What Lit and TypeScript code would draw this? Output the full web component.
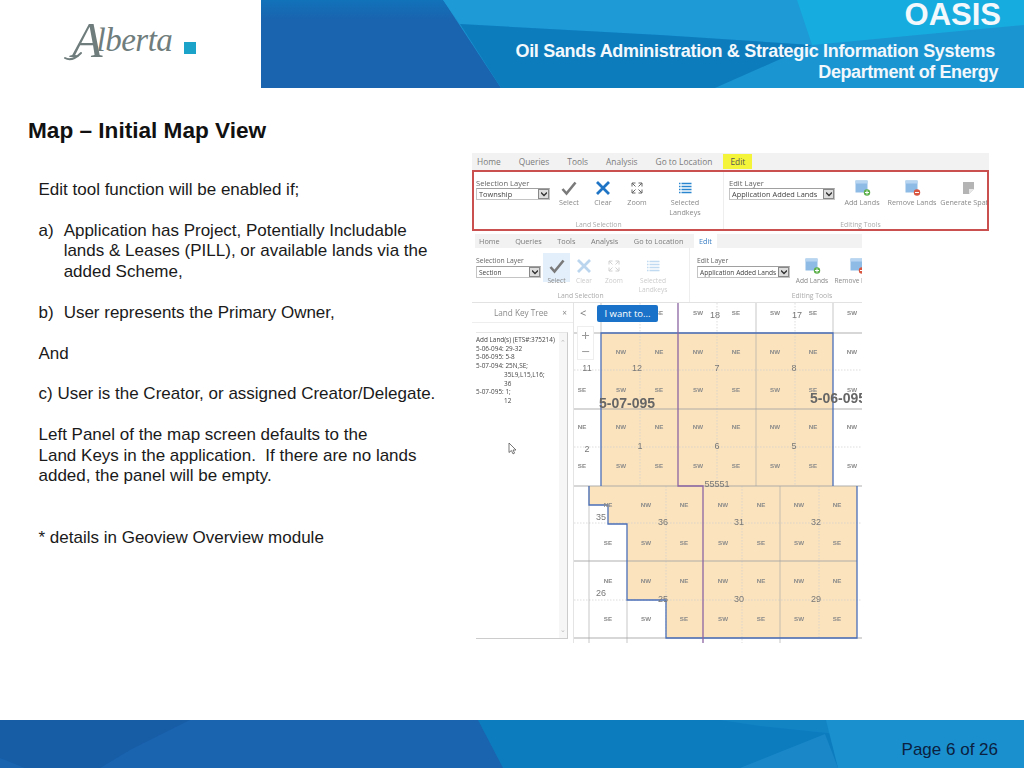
import { LitElement, css, html, svg } from "lit";
import { customElement } from "lit/decorators.js";

type Tool = { icon: string; label: string; w: number; dim?: boolean; on?: boolean };

const check = svg`<path d="M2.5 10l4 4.5L15.5 3.5" fill="none" stroke="#7a7a7a" stroke-width="2.6"/>`;
const cross = svg`<path d="M3 3l12 12M15 3L3 15" fill="none" stroke="#1f74c6" stroke-width="2.8"/>`;
const arrows = svg`<g fill="none" stroke="#666" stroke-width="1"><path d="M4 7.5V4h3.5M4 4l3.5 3.5M14 7.5V4h-3.5M14 4l-3.5 3.5M4 10.5V14h3.5M4 14l3.5-3.5M14 10.5V14h-3.5M14 14l-3.5-3.5"/></g>`;
const list = svg`<g stroke="#2b86d0" stroke-width="1.3"><path d="M5.5 4.5h10M5.5 7.5h10M5.5 10.5h10M5.5 13.5h10"/><path d="M3 4.5h1.5M3 7.5h1.5M3 10.5h1.5M3 13.5h1.5"/></g>`;
const sheet = (dot: string, sign: string) => svg`
  <rect x="2.5" y="1.5" width="12" height="12" fill="#8ebbe6"/>
  <rect x="2.5" y="1.5" width="12" height="3" fill="#b7d5f0"/>
  <circle cx="14" cy="13.5" r="3.2" fill="${dot}"/>
  <path d="${sign}" stroke="#fff" stroke-width="1"/>`;
const paper = svg`<path d="M4 3h11v7l-5 5H4z" fill="#b4b4b4"/><path d="M10 15v-5h5z" fill="#e8e8e8"/>`;

const ICONS: Record<string, unknown> = {
  check,
  cross,
  arrows,
  list,
  add: sheet("#5cb04a", "M12 13.5h4M14 11.5v4"),
  remove: sheet("#d8553f", "M12 13.5h4"),
  paper,
};

const TABS = ["Home", "Queries", "Tools", "Analysis", "Go to Location"];

const TOOLS_A: Tool[] = [
  { icon: "check", label: "Select", w: 34 },
  { icon: "cross", label: "Clear", w: 34 },
  { icon: "arrows", label: "Zoom", w: 34 },
  { icon: "list", label: "Selected Landkeys", w: 62 },
];
const EDIT_A: Tool[] = [
  { icon: "add", label: "Add Lands", w: 50 },
  { icon: "remove", label: "Remove Lands", w: 50 },
  { icon: "paper", label: "Generate Spatial", w: 62 },
];
const TOOLS_B: Tool[] = [
  { icon: "check", label: "Select", w: 27, on: true },
  { icon: "cross", label: "Clear", w: 28, dim: true },
  { icon: "arrows", label: "Zoom", w: 32, dim: true },
  { icon: "list", label: "Selected Landkeys", w: 46, dim: true },
];
const EDIT_B: Tool[] = [
  { icon: "add", label: "Add Lands", w: 40 },
  { icon: "remove", label: "Remove Lands", w: 50 },
];

// section label columns on the map, in page pixels
const TOP_X = [621, 659, 698, 736, 775, 813, 852];
const LOW_X = [608, 646, 684, 723, 761, 799, 837];

const cells = (xs: number[], y: number, names: string[]) =>
  xs.map((x, i) => svg`<text class="q" x=${x} y=${y}>${names[i % names.length]}</text>`);

const nums: [string, number, number][] = [
  ["18", 715, 318], ["17", 797, 318], ["11", 587, 371], ["12", 637, 371], ["7", 717, 371], ["8", 794, 371],
  ["2", 587, 452], ["1", 640, 449], ["6", 717, 449], ["5", 794, 449], ["55551", 717, 487],
  ["35", 601, 520], ["36", 663, 525], ["31", 739, 525], ["32", 816, 525],
  ["26", 601, 596], ["25", 663, 602], ["30", 739, 602], ["29", 816, 602],
];

@customElement("app-root")
export class AppRoot extends LitElement {
  static styles = css`
    :host {
      display: flex;
      flex-direction: column;
      width: 1024px;
      height: 768px;
      background: #fff;
      font-family: "Liberation Sans", Arial, sans-serif;
      overflow: hidden;
    }
    .header {
      display: flex;
      height: 88px;
      flex: none;
    }
    .logo {
      position: relative;
      width: 261px;
      display: flex;
      align-items: flex-start;
      padding: 16px 0 0 72px;
      box-sizing: border-box;
      color: #6f7d7c;
      font-family: "Liberation Serif", serif;
      font-style: italic;
      font-size: 33px;
      line-height: 48px;
      letter-spacing: -0.5px;
    }
    .logo b {
      font-weight: 400;
      font-size: 50px;
      letter-spacing: -6px;
    }
    .logo i {
      width: 12px;
      height: 12px;
      background: #1ba3c9;
      margin: 26px 0 0 12px;
    }
    .logo svg {
      position: absolute;
      left: 60px;
      top: 40px;
      width: 40px;
      height: 24px;
    }
    .banner {
      position: relative;
      flex: 1;
      color: #f2f8fc;
      font-weight: 700;
      text-align: right;
    }
    .bg {
      position: absolute;
      inset: 0;
      width: 100%;
      height: 100%;
    }
    .banner div {
      position: relative;
    }
    .oasis {
      font-size: 31px;
      line-height: 30px;
      padding-right: 23px;
    }
    .l1 {
      font-size: 18px;
      line-height: 20px;
      margin-top: 11px;
      padding-right: 29px;
      letter-spacing: -0.32px;
    }
    .l2 {
      font-size: 18px;
      line-height: 20px;
      margin-top: 1px;
      padding-right: 26px;
      letter-spacing: -0.42px;
    }
    .main {
      flex: 1;
      display: flex;
      min-height: 0;
    }
    .left {
      width: 472px;
      flex: none;
      padding: 31px 0 0 28px;
      box-sizing: border-box;
    }
    h1 {
      margin: 0 0 37px;
      font-size: 22.6px;
      line-height: 24px;
      color: #111;
    }
    .copy {
      padding-left: 10.5px;
      font-size: 17px;
      line-height: 20.45px;
      color: #1a1a1a;
      white-space: nowrap;
    }
    .copy p {
      margin: 0 0 20.45px;
    }
    .copy .item {
      display: flex;
      gap: 10px;
    }
    .copy .extra {
      margin-bottom: 40.9px;
    }
    .shot {
      width: 517px;
      padding-top: 65px;
      filter: blur(0.35px);
    }
    .tabs {
      display: flex;
      align-items: center;
      color: #7b7b7b;
    }
    .ribbon-a .tabs {
      height: 17px;
      gap: 18px;
      padding-left: 5px;
      background: #f2f2f2;
      font: 8.4px "Open Sans", sans-serif;
    }
    .ribbon-a .active {
      background: #f4f43a;
      color: #555;
      padding: 0 7px;
      margin-left: -7px;
      line-height: 15px;
    }
    .ribbon-a .body {
      display: flex;
      height: 61px;
      box-sizing: border-box;
      border: 2px solid #c9504e;
      overflow: hidden;
      --pad: 7px;
      --fs: 7.2px;
      --cap: 9px;
    }
    .ribbon-b {
      width: 390px;
      margin-top: 3px;
    }
    .ribbon-b .tabs {
      height: 14px;
      margin-left: 3px;
      gap: 15.5px;
      padding-left: 4px;
      background: #f2f2f2;
      font: 7.3px "Open Sans", sans-serif;
    }
    .ribbon-b .active {
      background: #fff;
      color: #3d80c4;
      padding: 0 5px;
      margin-left: -5px;
      line-height: 14px;
    }
    .ribbon-b .body {
      display: flex;
      height: 55px;
      box-sizing: border-box;
      border-bottom: 1px solid #e2e2e2;
      overflow: hidden;
      --pad: 9px;
      --fs: 6.6px;
      --cap: 11px;
    }
    .group {
      flex: none;
      display: flex;
      flex-direction: column;
      box-sizing: border-box;
      border-right: 1px solid #eee;
    }
    .group-a1 { width: 250px; }
    .group-a2 { width: 274px; }
    .group-b1 { width: 218px; }
    .group-b2 { width: 245px; }
    .row {
      flex: 1;
      display: flex;
      padding-top: var(--pad);
      min-height: 0;
    }
    .caption {
      height: var(--cap);
      font: 6.8px/9px "Open Sans", sans-serif;
      color: #ababab;
      text-align: center;
    }
    .field {
      flex: none;
      padding-left: 2px;
      font: 7.6px/8px "Open Sans", sans-serif;
      color: #666;
    }
    .group-a1 .field { width: 78px; box-sizing: border-box; padding-right: 2px; }
    .group-a2 .field { width: 113px; box-sizing: border-box; padding: 0 2px 0 5px; }
    .group-b1 .field { width: 71px; box-sizing: border-box; padding: 0 2px 0 4px; font-size: 6.8px; }
    .group-b2 .field { width: 102px; box-sizing: border-box; padding: 0 2px 0 7px; font-size: 6.8px; }
    .select {
      display: flex;
      align-items: center;
      justify-content: space-between;
      height: 12px;
      margin-top: 1px;
      border: 1px solid #c4c4c4;
      border-top-color: #a0a0a0;
      box-sizing: border-box;
      padding-left: 2px;
      color: #444;
      font: 7.4px "Open Sans", sans-serif;
      white-space: nowrap;
    }
    .ribbon-b .select {
      font-size: 6.6px;
    }
    .select u {
      flex: none;
      width: 11px;
      height: 10px;
      background: #ddd;
      border: 1px solid #888;
      box-sizing: border-box;
      display: flex;
      align-items: center;
      justify-content: center;
    }
    .select svg {
      width: 6px;
      height: 6px;
    }
    .tool {
      flex: none;
      display: flex;
      flex-direction: column;
      align-items: center;
      text-align: center;
      font: var(--fs) / 9.5px "Open Sans", sans-serif;
      color: #8a8a8a;
    }
    .tool svg {
      width: 18px;
      height: 18px;
      flex: none;
      margin-bottom: 1px;
    }
    .tool.nowrap {
      white-space: nowrap;
    }
    .tool.wrap span {
      max-width: 40px;
    }
    .tool.dim {
      color: #ccc;
    }
    .tool.dim svg {
      opacity: 0.3;
    }
    .tool.on {
      background: #e3effa;
      height: 29px;
      margin-top: -4px;
      padding-top: 4px;
      box-sizing: border-box;
    }
    .ribbon-b .tool {
      line-height: 9px;
    }
    .map {
      position: relative;
      width: 390px;
      height: 340px;
      display: flex;
    }
    .panel {
      width: 102px;
      flex: none;
      border-right: 1px solid #e4e4e4;
      box-sizing: border-box;
      display: flex;
      flex-direction: column;
    }
    .panel-head {
      display: flex;
      justify-content: space-between;
      align-items: center;
      height: 19px;
      padding: 0 6px 0 22px;
      border-bottom: 1px solid #eee;
      color: #8a8a8a;
      font: 8.2px "Open Sans", sans-serif;
    }
    .tree {
      flex: none;
      height: 307px;
      width: 92px;
      margin: 9px 0 0 4px;
      padding-top: 3px;
      box-sizing: border-box;
      position: relative;
      border-top: 1px solid #e6e6e6;
      border-right: 1px solid #ccc;
      border-bottom: 1px solid #ccc;
      font: 6.4px/8.7px "Open Sans", sans-serif;
      color: #444;
    }
    .tree .in {
      padding-left: 28px;
    }
    .scroll {
      position: absolute;
      top: 0;
      right: 0;
      bottom: 0;
      width: 8px;
      background: #f6f6f6;
      color: #bbb;
      font-size: 7px;
      line-height: 8px;
      text-align: center;
      display: flex;
      flex-direction: column;
      justify-content: space-between;
      padding: 6px 0 4px;
      box-sizing: border-box;
    }
    .canvas {
      width: 288px;
      height: 340px;
      flex: none;
      display: block;
    }
    .canvas text {
      font-family: "Liberation Sans", Arial, sans-serif;
    }
    .q {
      font-size: 6.2px;
      font-weight: 700;
      fill: #8a8a8a;
      text-anchor: middle;
      dominant-baseline: middle;
    }
    .n {
      font-size: 9px;
      fill: #777;
      text-anchor: middle;
      dominant-baseline: middle;
    }
    .twp {
      font-size: 14px;
      font-weight: 700;
      fill: #666;
      dominant-baseline: middle;
    }
    .want {
      position: absolute;
      left: 125px;
      top: 2px;
      width: 61px;
      height: 17px;
      border-radius: 2px;
      background: #1a73c8;
      color: #fff;
      font: 9.5px/17px "Open Sans", sans-serif;
      text-align: center;
    }
    .back {
      position: absolute;
      left: 108px;
      top: 4px;
      color: #777;
      font: 11px/12px "Open Sans", sans-serif;
    }
    .zoombox {
      position: absolute;
      left: 105px;
      top: 23px;
      width: 17px;
      height: 34px;
      background: #fff;
      border: 1px solid #eee;
      box-sizing: border-box;
      color: #999;
      font: 15px/16px "Open Sans", sans-serif;
      text-align: center;
    }
    .cursor {
      position: absolute;
      left: 36px;
      top: 139px;
      width: 9px;
      height: 13px;
    }
    .footer {
      position: relative;
      height: 48px;
      flex: none;
      display: flex;
      justify-content: flex-end;
      align-items: flex-start;
    }
    .page {
      position: relative;
      padding: 21px 26px 0 0;
      font-size: 17px;
      line-height: 18px;
      color: #0b2140;
    }
  `;

  private tool(t: Tool) {
    return html`<div
      class="tool ${t.dim ? "dim" : ""} ${t.on ? "on" : ""} ${t.label.includes("Landkeys") ? "wrap" : "nowrap"}"
      style="width:${t.w}px"
    >
      <svg viewBox="0 0 18 18">${ICONS[t.icon]}</svg>
      <span>${t.label}</span>
    </div>`;
  }

  private group(cls: string, title: string, value: string, tools: Tool[], caption: string) {
    return html`<div class="group ${cls}">
      <div class="row">
        <div class="field">
          ${title}
          <div class="select">
            ${value}
            <u><svg viewBox="0 0 6 6"><path d="M0 1.5l3 3 3-3" fill="none" stroke="#333" stroke-width="1.4" /></svg></u>
          </div>
        </div>
        ${tools.map((t) => this.tool(t))}
      </div>
      <div class="caption">${caption}</div>
    </div>`;
  }

  private tabs() {
    return html`<div class="tabs">
      ${TABS.map((t) => html`<span class="tab">${t}</span>`)}
      <span class="tab active">Edit</span>
    </div>`;
  }

  private mapSvg() {
    const blue = "#4a6fb8";
    const purple = "#8b66a3";
    return svg`
      <path d="M601 335H833V488H601Z" fill="#fbe3bd"/>
      <path d="M589 488H857V640H666V602H627V526H608V507H589Z" fill="#fbe3bd"/>
      <g stroke="#cfcfcf" stroke-width=".7" stroke-dasharray="1.5 1.5" fill="none">
        <path d="M574 372H862M574 449H862M574 525H862M574 602H862"/>
        <path d="M640 305V488M717 305V488M795 305V488M666 488V640M742 488V645M819 488V640"/>
      </g>
      <g stroke="#a6a6a6" stroke-width=".9" fill="none">
        <path d="M574 335H862M574 411H862M574 488H862M574 563H857M574 640H862"/>
        <path d="M601 305V335M756 305V488M833 305V335M780 488V645M627 602V645M589 488V645" opacity=".7"/>
      </g>
      <g stroke=${blue} stroke-width="1.3" fill="none">
        <path d="M601 488V335H833V488"/>
        <path d="M589 488V507H608V526H627V602H666V640H857V488"/>
      </g>
      <path d="M678 305V488H703V645" stroke=${purple} stroke-width="1.3" fill="none"/>
      ${cells([659, 698, 736, 775, 813, 852], 315, ["SE", "SW"])}
      ${cells(TOP_X, 354, ["NW", "NE"])}
      ${cells(TOP_X, 392, ["SW", "SE"])}
      ${cells(TOP_X, 429, ["NW", "NE"])}
      ${cells(TOP_X, 468, ["SW", "SE"])}
      <text class="q" x="582" y="392">SE</text>
      <text class="q" x="582" y="429">NE</text>
      <text class="q" x="582" y="468">SE</text>
      ${cells(LOW_X, 507, ["NE", "NW"])}
      ${cells(LOW_X, 545, ["SE", "SW"])}
      ${cells(LOW_X, 583, ["NE", "NW"])}
      ${cells(LOW_X, 621, ["SE", "SW"])}
      ${nums.map(([t, x, y]) => svg`<text class="n" x=${x} y=${y}>${t}</text>`)}
      <text class="twp" x="599" y="406">5-07-095</text>
      <text class="twp" x="810" y="401">5-06-095</text>`;
  }

  render() {
    return html`
      <div class="header">
        <div class="logo">
          <b>A</b>lberta<i></i>
          <svg viewBox="0 0 40 24"><path d="M5 18c5 3 10 1 16-5" fill="none" stroke="#6f7d7c" stroke-width="2" stroke-linecap="round" /></svg>
        </div>
        <div class="banner">
          <svg class="bg" viewBox="261 0 763 88" preserveAspectRatio="none">
            <defs>
              <linearGradient id="top" x1="0" y1="0" x2="0" y2="1">
                <stop offset="0" stop-color="#1172ba" />
                <stop offset="1" stop-color="#1a63ae" />
              </linearGradient>
            </defs>
            <rect x="261" width="763" height="88" fill="#1b95d2" />
            <path d="M261 0H443L501 88H261Z" fill="#1a63ae" />
            <path d="M261 0H443L455 20H261Z" fill="url(#top)" />
            <path d="M443 0H797L812 45 660 35 460 24Z" fill="#1e9ad7" />
            <path d="M460 24L660 35 812 45 715 88H501Z" fill="#0d7cbd" />
            <path d="M797 0H1024V25L812 45Z" fill="#17acdf" />
          </svg>
          <div class="oasis">OASIS</div>
          <div class="l1">Oil Sands Administration &amp; Strategic Information Systems</div>
          <div class="l2">Department of Energy</div>
        </div>
      </div>
      <div class="main">
        <div class="left">
          <h1>Map – Initial Map View</h1>
          <div class="copy">
            <p>Edit tool function will be enabled if;</p>
            <p class="item">
              <span>a)</span>
              <span>Application has Project, Potentially Includable<br />lands &amp; Leases (PILL), or available lands via the<br />added Scheme,</span>
            </p>
            <p class="item"><span>b)</span><span>User represents the Primary Owner,</span></p>
            <p>And</p>
            <p>c) User is the Creator, or assigned Creator/Delegate.</p>
            <p class="extra">
              Left Panel of the map screen defaults to the<br />
              Land Keys in the application.&nbsp; If there are no lands<br />
              added, the panel will be empty.
            </p>
            <p>* details in Geoview Overview module</p>
          </div>
        </div>
        <div class="shot">
          <div class="ribbon-a">
            ${this.tabs()}
            <div class="body">
              ${this.group("group-a1", "Selection Layer", "Township", TOOLS_A, "Land Selection")}
              ${this.group("group-a2", "Edit Layer", "Application Added Lands", EDIT_A, "Editing Tools")}
            </div>
          </div>
          <div class="ribbon-b">
            ${this.tabs()}
            <div class="body">
              ${this.group("group-b1", "Selection Layer", "Section", TOOLS_B, "Land Selection")}
              ${this.group("group-b2", "Edit Layer", "Application Added Lands", EDIT_B, "Editing Tools")}
            </div>
          </div>
          <div class="map">
            <div class="panel">
              <div class="panel-head"><span>Land Key Tree</span><span>×</span></div>
              <div class="tree">
                Add Land(s) (ETS#:375214)<br />
                5-06-094: 29-32<br />
                5-06-095: 5-8<br />
                5-07-094: 25N,SE;
                <div class="in">35L9,L15,L16;</div>
                <div class="in">36</div>
                5-07-095: 1;
                <div class="in">12</div>
                <div class="scroll"><span>⌃</span><span>⌄</span></div>
              </div>
            </div>
            <svg class="canvas" viewBox="574 305 288 340">${this.mapSvg()}</svg>
            <div class="back">&lt;</div>
            <div class="zoombox">+<br />−</div>
            <div class="want">I want to...</div>
            <svg class="cursor" viewBox="0 0 9 13">
              <path d="M1 1v9.5l2.4-2 1.6 3.4 1.6-.8L5 8h3z" fill="#fff" stroke="#555" stroke-width=".8" />
            </svg>
          </div>
        </div>
      </div>
      <div class="footer">
        <svg class="bg" viewBox="0 0 1024 48" preserveAspectRatio="none">
          <rect width="1024" height="48" fill="#1a63ae" />
          <path d="M0 0H190L130 30 100 48H25L0 38Z" fill="#165da6" />
          <path d="M478 0H1024V48H503Z" fill="#0d7cbe" />
          <path d="M720 0H826L836 14 760 6Z" fill="#1284c4" />
          <path d="M826 0H1024V48H838Z" fill="#1a90cf" />
          <path d="M825 14L838 48H740Z" fill="#1a87c8" />
        </svg>
        <div class="page">Page 6 of 26</div>
      </div>
    `;
  }
}
